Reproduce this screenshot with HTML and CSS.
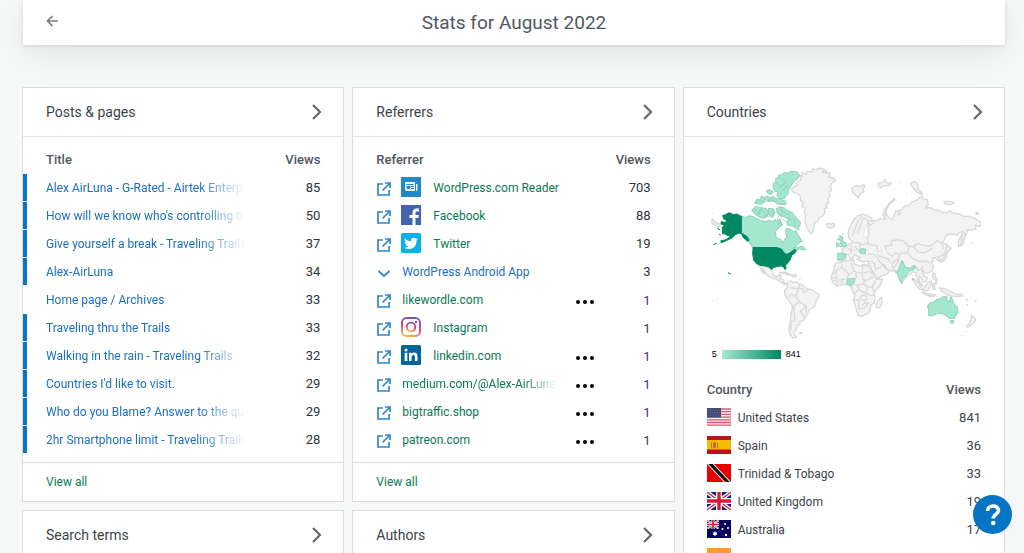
FILE: index.html
```html
<!DOCTYPE html>
<html lang="en">
<head>
<meta charset="utf-8">
<title>Stats for August 2022</title>
<link rel="stylesheet" href="styles.css">
</head>
<body>
<svg class="sprite" aria-hidden="true">
  <symbol id="chevron" viewBox="0 0 12 18"><path d="M2 2l7 7-7 7" fill="none" stroke="#646970" stroke-width="2.2"/></symbol>
  <symbol id="external" viewBox="0 0 14 14"><path d="M6 2H1v11h11V8M8 1h5v5M13 1L5.500 8.500" fill="none" stroke="#2f86cc" stroke-width="1.700"/></symbol>
  <symbol id="dots" viewBox="0 0 18 4"><g fill="#000"><circle cx="2" cy="2" r="2"/><circle cx="9" cy="2" r="2"/><circle cx="16" cy="2" r="2"/></g></symbol>
  <symbol id="union" viewBox="0 0 24 18"><path fill="#0b2170" d="M0 0h24v18H0z"/><path d="M0 0l24 18M24 0L0 18" stroke="#fff" stroke-width="4"/><path d="M0 0l24 18M24 0L0 18" stroke="#d01c35" stroke-width="1.300"/><path d="M12 0v18M0 9h24" stroke="#fff" stroke-width="6"/><path d="M12 0v18M0 9h24" stroke="#d01c35" stroke-width="3.400"/></symbol>
</svg>

<header class="topbar">
  <button class="back" type="button" aria-label="Back">
    <svg width="12" height="12" viewBox="0 0 12 12"><path d="M12 6H1.500M6.500 1L1.500 6l5 5" fill="none" stroke="#787c82" stroke-width="1.700"/></svg>
  </button>
  <h1>Stats for August 2022</h1>
</header>

<main class="grid">
  <div class="column">
    <section class="card">
      <h2><a href="#posts">Posts &amp; pages<svg class="chevron"><use href="#chevron"/></svg></a></h2>
      <table class="posts">
        <thead><tr><th>Title</th><th class="num">Views</th></tr></thead>
        <tbody>
          <tr class="marked"><td><a class="fade" href="#p1">Alex AirLuna - G-Rated - Airtek Enterprises</a></td><td class="num">85</td></tr>
          <tr class="marked"><td><a class="fade" href="#p2">How will we know who's controlling the</a></td><td class="num">50</td></tr>
          <tr class="marked"><td><a class="fade" href="#p3">Give yourself a break - Traveling Trails</a></td><td class="num">37</td></tr>
          <tr class="marked"><td><a class="fade" href="#p4">Alex-AirLuna</a></td><td class="num">34</td></tr>
          <tr><td><a class="fade" href="#p5">Home page / Archives</a></td><td class="num">33</td></tr>
          <tr class="marked"><td><a class="fade" href="#p6">Traveling thru the Trails</a></td><td class="num">33</td></tr>
          <tr class="marked"><td><a class="fade" href="#p7">Walking in the rain - Traveling Trails</a></td><td class="num">32</td></tr>
          <tr class="marked"><td><a class="fade" href="#p8">Countries I'd like to visit.</a></td><td class="num">29</td></tr>
          <tr class="marked"><td><a class="fade" href="#p9">Who do you Blame? Answer to the question</a></td><td class="num">29</td></tr>
          <tr class="marked"><td><a class="fade" href="#p10">2hr Smartphone limit - Traveling Trails</a></td><td class="num">28</td></tr>
        </tbody>
      </table>
      <a class="viewall" href="#all-posts">View all</a>
    </section>
    <section class="card">
      <h2><a href="#search">Search terms<svg class="chevron"><use href="#chevron"/></svg></a></h2>
    </section>
  </div>

  <div class="column">
    <section class="card">
      <h2><a href="#referrers">Referrers<svg class="chevron"><use href="#chevron"/></svg></a></h2>
      <table class="referrers">
        <thead><tr><th>Referrer</th><th class="more"></th><th class="num">Views</th></tr></thead>
        <tbody>
          <tr><td><div class="ref"><svg class="ext"><use href="#external"/></svg>
            <svg class="brand" viewBox="0 0 20 20"><path fill="#2487c7" d="M0 0h20v20H0z"/><path fill="#e8f4fc" d="M4 5h10v9H5l-1-1zM15 7h1.500v6l-1 1H15z"/><path d="M5.500 7.500h7M10 9.500h3M10 11.500h3M6 9.500h3v2H6z" stroke="#2487c7" fill="#2487c7"/></svg>
            <a href="#r1">WordPress.com Reader</a></div></td><td></td><td class="num">703</td></tr>
          <tr><td><div class="ref"><svg class="ext"><use href="#external"/></svg>
            <svg class="brand" viewBox="0 0 20 20"><path fill="#4463ae" d="M0 0h20v20H0z"/><path fill="#fff" d="M11.500 20v-7H8.500v-3h3V8c0-3 1.500-4.500 4.200-4.500H18v3h-1.800c-1.200 0-1.700.5-1.700 1.500v2h3.300l-.4 3h-2.900v7z"/></svg>
            <a href="#r2">Facebook</a></div></td><td></td><td class="num">88</td></tr>
          <tr><td><div class="ref"><svg class="ext"><use href="#external"/></svg>
            <svg class="brand" viewBox="0 0 20 20"><rect width="20" height="20" rx="1.500" fill="#09b0ee"/><path fill="#fff" d="M17 6c-.5.300-1 .4-1.600.5.600-.4 1-.9 1.200-1.600-.6.300-1.200.6-1.800.7A2.900 2.900 0 0 0 9.900 8.200C7.500 8.100 5.400 7 4 5.200c-.8 1.300-.3 3 .9 3.800-.5 0-.9-.1-1.300-.3 0 1.400 1 2.500 2.300 2.800-.4.100-.9.100-1.300 0 .4 1.200 1.400 2 2.700 2A5.800 5.800 0 0 1 3 14.700c5.500 3.400 12.700.4 12.600-7.300A5 5 0 0 0 17 6z"/></svg>
            <a href="#r3">Twitter</a></div></td><td></td><td class="num">19</td></tr>
          <tr><td><div class="ref"><svg class="ext" viewBox="0 0 14 14"><path d="M1.500 5L7 10l5.500-5" fill="none" stroke="#2f86cc" stroke-width="1.700"/></svg>
            <button class="expand" type="button">WordPress Android App</button></div></td><td></td><td class="num">3</td></tr>
          <tr class="low"><td><div class="ref"><svg class="ext"><use href="#external"/></svg><a href="#r5">likewordle.com</a></div></td><td><button class="dots" type="button" aria-label="More"><svg width="18" height="4"><use href="#dots"/></svg></button></td><td class="num">1</td></tr>
          <tr class="low"><td><div class="ref"><svg class="ext"><use href="#external"/></svg>
            <svg class="brand" viewBox="0 0 20 20"><defs><linearGradient id="ig" x1=".3" y1="1" x2=".6" y2="0"><stop offset="0" stop-color="#fcb44c"/><stop offset=".5" stop-color="#d9307a"/><stop offset="1" stop-color="#7854c4"/></linearGradient></defs><g fill="none" stroke="url(#ig)"><rect x="1" y="1" width="18" height="18" rx="4.500" stroke-width="1.800"/><circle cx="10" cy="10" r="4.300" stroke-width="1.800"/></g><circle cx="15" cy="5" r="1.200" fill="#b13a9c"/></svg>
            <a href="#r6">Instagram</a></div></td><td></td><td class="num">1</td></tr>
          <tr class="low"><td><div class="ref"><svg class="ext"><use href="#external"/></svg>
            <svg class="brand" viewBox="0 0 20 20"><rect width="20" height="20" rx="1.500" fill="#00669c"/><circle cx="5" cy="5" r="1.500" fill="#fff"/><path fill="#fff" d="M3.700 7.700h2.600V16H3.700zM8 7.700h2.500v1.200c1.400-2.300 6-2 6 2V16h-2.600v-4.200c0-2.700-3.300-2.400-3.300.2v4H8z"/></svg>
            <a href="#r7">linkedin.com</a></div></td><td><button class="dots" type="button" aria-label="More"><svg width="18" height="4"><use href="#dots"/></svg></button></td><td class="num">1</td></tr>
          <tr class="low"><td><div class="ref"><svg class="ext"><use href="#external"/></svg><a class="fade" href="#r8">medium.com/@Alex-AirLuna</a></div></td><td><button class="dots" type="button" aria-label="More"><svg width="18" height="4"><use href="#dots"/></svg></button></td><td class="num">1</td></tr>
          <tr class="low"><td><div class="ref"><svg class="ext"><use href="#external"/></svg><a href="#r9">bigtraffic.shop</a></div></td><td><button class="dots" type="button" aria-label="More"><svg width="18" height="4"><use href="#dots"/></svg></button></td><td class="num">1</td></tr>
          <tr class="low"><td><div class="ref"><svg class="ext"><use href="#external"/></svg><a href="#r10">patreon.com</a></div></td><td><button class="dots" type="button" aria-label="More"><svg width="18" height="4"><use href="#dots"/></svg></button></td><td class="num">1</td></tr>
        </tbody>
      </table>
      <a class="viewall" href="#all-referrers">View all</a>
    </section>
    <section class="card">
      <h2><a href="#authors">Authors<svg class="chevron"><use href="#chevron"/></svg></a></h2>
    </section>
  </div>

  <div class="column">
    <section class="card">
      <h2><a href="#countries">Countries<svg class="chevron"><use href="#chevron"/></svg></a></h2>
      <div class="map">
        <svg viewBox="21 0 822 555" role="img" aria-label="Views by country">
          <g class="land">
            <path d="M299 47L308 48 306 38 319 42 322 33 334 37 338 27 348 29 356 24 373 28 368 37 380 32 376 41 390 38 385 51 401 54 407 62 395 69 391 80 394 91 387 96 390 109 382 117 386 129 377 132 381 145 372 145 375 158 366 169 358 172 353 184 343 188 341 202 339 214 334 221 326 212 320 199 315 188 313 176 318 165 312 157 315 144 305 140 309 127 300 121 301 109 293 101 280 98 274 88 282 79 292 77 289 68 302 60z"/>
            <path d="M380 193L386 189 390 193 401 190 404 197 393 205 384 202zM36 176l16 14 10 4-6 7-9-7-11-3z"/>
            <path d="M175 313L190 319 207 324 216 330 219 345 228 351 238 343 244 347 237 355 248 358 250 367 259 371 255 374 243 366 230 358 217 354 201 346 192 332 183 324 193 341 186 334z"/>
            <path d="M238 338l15-3 17 8-8 1-12-5zM272 344l14 0 4 5-13 1zM298 356l3 3"/>
            <path d="M262 369L271 362 278 367 291 366 299 373 312 378 320 386 333 388 347 397 356 401 357 408 349 420 346 432 341 442 328 448 323 460 314 473 310 481 300 483 298 493 291 496 288 508 280 519 289 531 278 533 269 522 266 506 271 484 272 464 277 448 276 434 264 420 253 402 254 391 261 383zM298 517l8 1-6 3z"/>
            <path d="M406 310L424 305 448 300 462 302 461 311 472 314 480 319 489 312 510 317 513 329 524 346 530 357 547 357 541 374 527 390 522 399 524 413 522 428 512 435 510 449 502 460 487 467 474 467 470 452 464 432 459 420 464 405 458 394 452 379 440 371 426 374 410 378 399 367 393 355 397 339 402 325z"/>
            <path d="M544 411L547 423 539 442 530 444 528 434 532 423z"/>
            <path d="M445 232L444 217 448 204 455 189 462 176 474 166 489 162 501 167 514 175 517 184 503 182 509 194 521 188 522 180 530 182 539 176 556 178 549 165 556 150 559 162 566 173 577 179 582 164 587 153 594 152 595 166 601 159 598 150 607 147 612 138 626 136 633 126 646 122 657 114 666 110 669 117 681 119 684 134 675 143 690 143 705 150 715 149 722 155 739 158 748 153 760 159 779 162 791 169 806 169 824 175 836 182 844 190 838 200 825 195 827 207 813 210 801 209 798 222 792 235 783 255 775 260 774 244 782 229 788 216 778 216 771 225 758 223 743 222 733 236 727 248 741 253 739 271 728 286 714 290 720 302 711 300 707 293 697 293 700 303 693 307 700 318 696 332 683 339 671 338 665 332 671 347 682 354 676 365 667 365 663 352 656 347 657 363 668 377 661 374 651 357 646 337 636 335 630 343 615 353 605 369 598 359 591 339 585 333 570 331 559 326 553 315 546 312 556 326 568 331 561 341 545 347 529 357 525 345 515 331 504 313 507 303 487 305 470 298 481 292 472 289 463 282 461 291 456 294 463 301 454 301 444 282 436 282 439 295 426 303 412 300 413 281 426 280 427 267 438 258 446 253 453 251 456 242 450 239z"/>
            <path d="M548 164L554 147 565 132 582 115 583 120 568 132 558 150 556 166zM455 84L466 77 478 80 492 74 494 81 486 84 492 94 481 100 475 114 467 106 459 98zM533 70l12-3 9-9 4 10 16 1-8 8-15 0-11 7zM631 71l12-7 9 9 1 14 12 12 0 5-15-8-11-12zM731 125l18-2 14 6-15 5-16-4zM827 158l7-1 1 6-7 0zM787 212l8 10-7 29-6 7 2-18z"/>
            <path d="M738 262L745 258 753 265 743 273 740 284 735 298 721 306 717 302 730 293 735 282zM697 340l7 0 1 9 6 8-2 6-10-8zM640 356L651 365 663 381 668 390 658 387 646 373zM671 385l14-20 10-2-4 12-8 16-10 1zM665 396l25 6 16 2-4 4-25-3zM696 372l13-5-8 10 4 10-7 1zM717 383L732 385 748 393 766 401 786 403 788 407 765 409 751 407 740 404 724 392z"/>
            <path d="M814 465L823 475 827 479 815 493 801 502 800 497 810 487zM824 424l5-5M796 416l7 6M798 432l5 3"/>
          </g>
          <g class="sea"><path d="M529 262l8-7 6 13 0 18-8-2-5-11zM481 279l10-10 10 2 6 9-13 4zM491 222l6-19 9-6-4 19 4 10-13 7z"/></g>
          <g class="borders">
            <path d="M456 228L463 213 468 195 477 177 486 168M472 220L477 207 484 186 491 174 501 179 506 216 502 230 503 249 515 256 529 256 533 273 542 274M445 253L460 247 476 248 488 255 503 249M464 257L472 270 481 278M441 263L454 273 464 268M452 253L453 281M477 250L480 265M558 270L555 258 574 255 574 242 595 239 609 243 626 259 641 258 653 250 665 254 686 259 700 252 710 242 725 250 730 267M626 260L622 279 635 294 653 302 665 305 676 302 689 309M640 260L654 276 670 278 687 271 696 263M600 279L622 279M560 277L577 289 585 278 599 283 593 297 578 307 574 326M532 285L547 292 563 296 571 307M512 304L523 310 526 328 544 320M503 283L520 282 533 294 538 307 549 311M585 334L580 322 590 312 597 298M649 318L652 333 664 325 672 337M664 325L668 317"/>
            <path d="M424 307L425 322 408 331 399 342M425 322L448 342 461 331 451 306M448 342L439 355M461 331L467 335 468 351 461 368M467 335L486 339 489 313M486 339L488 359 506 359 520 348M488 318h26M486 339l24-5 9 9M408 331l0 24-13-2M411 358v19M425 355v19M395 362l20-2 20-3M463 373l11 2 15-4 7-12M474 375l0 14-12 12M489 371l13 10 17 0M502 381l-4 17 12 8 14-1M476 388l14 9 8 2M461 418l15 2 8-14 13 0 3 12-10 3-6-4M476 420l0 28M485 436l10-9 12 2M476 448l15-4 14-15M516 380l7 18M526 361l-10 19"/>
            <path d="M298 374l-2 12 11-1 4 12 18-10M271 382l25 4-9 22-13-6-7 9M287 408l12 18 20 12-1 19M299 426l-17 11-8 17M282 437l2 44-12 4 1 25M318 438l-17 15 13 20"/>
          </g>
          <g class="some">
            <path d="M124 168L136 172 149 167 161 171 169 176 182 181 194 184 208 181 218 185 226 178 230 186 239 176 242 184 246 194 239 199 234 205 226 215 228 232 241 237 248 249 253 240 260 230 256 214 259 205 269 207 275 211 280 216 287 211 293 224 301 235 306 243 294 250 288 259 277 264 287 264 294 262 306 258 317 269 307 270 298 266 288 272 283 268 273 277 260 283 250 276 243 266 228 262 158 262 152 253 145 242 135 225 124 215z"/>
            <path d="M219 82L220 70 228 66 226 56 237 52 235 45 248 44 252 37 263 40 272 34 289 35 298 45 291 58 280 65 275 73 270 84 264 91 265 99 257 108 253 115 241 115 230 107 234 96 224 93zM164 130L169 119 181 117 184 108 193 115 193 126 184 132 174 132zM199 92l9-3 10 6-3 8-10-2zM190 112l12-3 12 4-3 12-11-2zM216 109l13 6 8 1 21 8-1 9-19 0-12-8-9-2zM155 151l13-12 15 4 15 2 7 14-5 12-16 3-11-7-7-4zM205 145l13 0 7 12-7 13-12-7zM229 145l11-5 11 3 6 6 12 5 8 5 6 8 9 10 9 10-2 12-7 1 5 10-12-8-9-5-12-1-4-10 8-7-13-8-11-3-11-9zM234 190l9-3 4 8-8 4z"/>
            <path d="M411 237l8-1 0-10 8 5 2 14 8 3 0 10-17 2 7-5-6-4 1-9zM409 249l8 1-1 9-7 1zM428 219v5M413 281l15-2 10 4-5 11-6 5-14 0zM480 267l10-1 7 3-1 11-12 0-5-5zM443 356l19-1 0 12-9 10-9-3-5-6zM585 336L594 331 599 316 605 301 610 309 613 319 627 325 643 316 647 321 636 331 627 332 618 346 608 354 604 369 598 359 591 339zM636 355l4 2-3 3zM682 437L689 429 702 424 711 418 722 415 727 410 740 410 739 421 747 425 752 410 757 419 761 431 771 441 773 454 763 474 749 475 738 466 724 459 709 461 695 467 685 465 685 451zM751 481h9l-3 9-5-1zM812 248l3 2M781 526l2 2"/>
          </g>
          <g class="texture"><path d="M167 126l16-6 8 8M165 146l12 18 4-17 20 17M190 181l5-16 22 7 3-25M204 120l15 1 11 10 21 0M228 68l12 10 20-13-22-12M235 85l19-15 10 15M239 108l18-30M239 147l12 10 14 4 5 15 13 6 3 17M248 152l-7 17 16 16 17-10M230 182l8-18-9-11"/></g>
          <g class="most">
            <path d="M124 169L109 162 100 164 88 158 76 164 68 167 72 177 80 180 77 187 64 185 63 191 75 197 67 201 68 211 67 220 76 222 82 226 92 226 85 235 74 240 62 243 64 247 76 243 88 237 96 233 105 224 117 219 129 222 140 229 147 240 142 243 129 231 124 219z"/>
            <path d="M159 262h70l15 5 7 11 10 5 12-7 10-8 5 3-5 9-8 5-5 14-8 10-7 7 3 7-3 5-5-8-8-3-13 3-9 2-5 6-7-7-10-3-15-2-12-5-10-11-3-18zM40 253l10-3M52 204l7 5M84 338l8 4M57 222l4 2"/>
          </g>
          <g class="specks"><path d="M37 159h3M314 203h2M414 162h2M370 295h3M232 386h1M36 421h2M50 414h3M44 491h1M395 319h4M546 317h3M601 70h3M617 99h3M474 135h2M561 430h2M685 410h10M797 515h2"/></g>
        </svg>
        <div class="legend"><span>5</span><i class="scale"></i><span>841</span></div>
      </div>
      <table class="countries">
        <thead><tr><th>Country</th><th class="num">Views</th></tr></thead>
        <tbody>
          <tr><td><div class="place"><svg class="flag" viewBox="0 0 24 18"><path fill="#f8eef0" d="M0 0h24v18H0z"/><path d="M0 1h24M0 3.700h24M0 6.400h24M0 9.100h24M0 11.800h24M0 14.500h24M0 17.200h24" stroke="#d65b70" stroke-width="1.300"/><path fill="#3f4b78" d="M0 0h14v9.500H0z"/><path d="M1 2h12M2 4.500h11M1 7h12" stroke="#8790ad" stroke-width=".6" stroke-dasharray="1 1.500"/></svg>United States</div></td><td class="num">841</td></tr>
          <tr><td><div class="place"><svg class="flag" viewBox="0 0 24 18"><path fill="#b5151f" d="M0 0h24v18H0z"/><path fill="#f5bd00" d="M0 4h24v9.500H0z"/><path fill="#bd6b38" d="M4 7l1-.5v6H4zM10 7l1-.5v6h-1zM6 7l1.500-1.500L9 7v4.500l-1.500 1L6 11.500z"/></svg>Spain</div></td><td class="num">36</td></tr>
          <tr><td><div class="place"><svg class="flag" viewBox="0 0 24 18"><path fill="#e60000" d="M0 0h24v18H0z"/><path fill="#fff" d="M0 0h7l17 18h-7z"/><path fill="#151515" d="M1.200 0h4.600l17 18h-4.600z"/></svg>Trinidad &amp; Tobago</div></td><td class="num">33</td></tr>
          <tr><td><div class="place"><svg class="flag" viewBox="0 0 24 18"><use href="#union"/></svg>United Kingdom</div></td><td class="num">19</td></tr>
          <tr><td><div class="place"><svg class="flag" viewBox="0 0 24 18"><path fill="#06065e" d="M0 0h24v18H0z"/><use href="#union" width="12" height="9"/><g fill="#fff"><path d="M8 11l.7 1.500 1.700-.2-1 1.400 1 1.400-1.700-.2L8 16.500l-.7-1.600-1.700.2 1-1.400-1-1.400 1.700.2z"/><circle cx="18" cy="4" r="1"/><circle cx="21" cy="8" r="1"/><circle cx="15.500" cy="9" r="1"/><circle cx="19" cy="15" r="1.200"/></g></svg>Australia</div></td><td class="num">17</td></tr>
          <tr><td><div class="place"><svg class="flag" viewBox="0 0 24 18"><path fill="#fff" d="M0 0h24v18H0z"/><path fill="#ff9933" d="M0 0h24v6H0z"/><path fill="#138808" d="M0 12h24v6H0z"/></svg></div></td><td class="num"></td></tr>
        </tbody>
      </table>
    </section>
  </div>
</main>

<button class="help" type="button" aria-label="Help"><svg width="20" height="24" viewBox="0 0 20 24"><path d="M4.500 8c0-6.500 11-6.500 11-.5 0 4-5.300 3.700-5.300 8" fill="none" stroke="#fff" stroke-width="3.600"/><circle cx="10.200" cy="20" r="2.300" fill="#fff"/></svg></button>
</body>
</html>
```
FILE: styles.css
```css
html { scrollbar-width: none; }
* { box-sizing: border-box; }
body {
  margin: 0;
  padding: 0 19px 0 22px;
  background: #f6f7f7;
  color: #2c3338;
  font: 12px/18px Roboto, "Liberation Sans", sans-serif;
}
a { color: inherit; text-decoration: none; }
button { padding: 0; border: 0; background: none; color: inherit; font: inherit; cursor: pointer; }
svg { display: block; flex: none; }
.sprite { position: absolute; width: 0; height: 0; }

.topbar {
  display: grid;
  grid-template-columns: 36px 1fr 36px;
  align-items: center;
  height: 45px;
  padding: 0 23px;
  margin: 0 0 42px 1px;
  background: #fff;
  box-shadow: 0 1px 4px rgba(0, 0, 0, .12), 0 8px 36px rgba(0, 0, 0, .08);
}
.topbar h1 {
  margin: 0;
  color: #50575e;
  font-size: 19px;
  font-weight: 400;
  line-height: 24px;
  text-align: center;
}
.back { width: 12px; height: 16px; margin-bottom: 4px; }

.grid { display: grid; grid-template-columns: repeat(3, minmax(0, 1fr)); gap: 8px; }
.column { display: flex; flex-direction: column; gap: 8px; }
.card { background: #fff; border: 1px solid #dcdcde; }
.card h2 { margin: 0; border-bottom: 1px solid #e4e5e6; font-size: 14px; font-weight: 400; line-height: 20px; }
.card h2 a { display: flex; align-items: center; justify-content: space-between; padding: 14px 20px 14px 23px; color: #3c434a; }
.chevron { width: 12px; height: 18px; }

table { width: 100%; margin: 9px 0 8px; border-collapse: collapse; table-layout: fixed; }
th, td { height: 28px; padding: 0; text-align: left; font-weight: 400; white-space: nowrap; }
th { color: #50575e; font-size: 13px; font-weight: 500; }
th:first-child, td:first-child { padding-left: 23px; }
.num { width: 80px; padding-right: 23px; font-size: 13px; text-align: right; }

.fade {
  display: block;
  overflow: hidden;
  -webkit-mask-image: linear-gradient(to right, #000 calc(100% - 48px), transparent);
  mask-image: linear-gradient(to right, #000 calc(100% - 48px), transparent);
}
.posts td a { width: 200px; color: #1a6fc0; }
.marked td:first-child { background: linear-gradient(#0675c4, #0675c4) 0 0 / 4px 27px no-repeat; }

.referrers { color: #2c3338; }
.more { width: 40px; }
.referrers .num { width: 58px; }
.ref { display: flex; align-items: center; gap: 10px; color: #0a7a55; }
.ref .ext { width: 14px; height: 14px; margin: 2px 1px 0 1px; }
.ref .brand { width: 20px; height: 20px; margin: 0 2px 2px 0; }
.ref .ext + .brand { margin-left: -1px; }
.ref .fade { width: 156px; -webkit-mask-image: linear-gradient(to right, #000 calc(100% - 36px), transparent); mask-image: linear-gradient(to right, #000 calc(100% - 36px), transparent); }
.expand { color: #1a6fc0; }
.dots { display: block; padding-top: 4px; }
.low .num { padding-top: 2px; color: #4b2e6b; }

.viewall { display: block; padding: 10px 23px; border-top: 1px solid #dcdcde; color: #0a7a55; }

.map { padding: 23px 23px 0; }
.map svg { width: 100%; height: auto; }
.map path { stroke-linejoin: round; }
.land { fill: #f3f3f3; stroke: #d8d8d8; stroke-width: 4; }
.sea { fill: #fff; stroke: #dedede; stroke-width: 2; }
.borders { fill: none; stroke: #dadada; stroke-width: 4; }
.some { fill: #a4e7cf; stroke: #92d1bb; stroke-width: 3; }
.texture { fill: none; stroke: #8bc8b2; stroke-width: 2; }
.most { fill: #008763; stroke: #008763; stroke-width: 3; }
.specks { stroke: #d2d5d5; stroke-width: 3; }
.legend { display: flex; align-items: center; gap: 5px; height: 10px; margin: 4px 0 17px 5px; font: 9px/10px "Liberation Sans", sans-serif; color: #000; }
.scale { width: 59px; height: 9px; background: linear-gradient(to right, #a5e9d0, #008763); }

.countries { margin-top: 0; color: #3c434a; }
.place { display: flex; align-items: center; gap: 7px; }
.flag { width: 24px; height: 18px; margin-bottom: 3px; }

.help {
  position: fixed;
  right: 12px;
  bottom: 19px;
  display: flex;
  align-items: center;
  justify-content: center;
  width: 39px;
  height: 39px;
  border-radius: 50%;
  background: #0675c4;
}
```
